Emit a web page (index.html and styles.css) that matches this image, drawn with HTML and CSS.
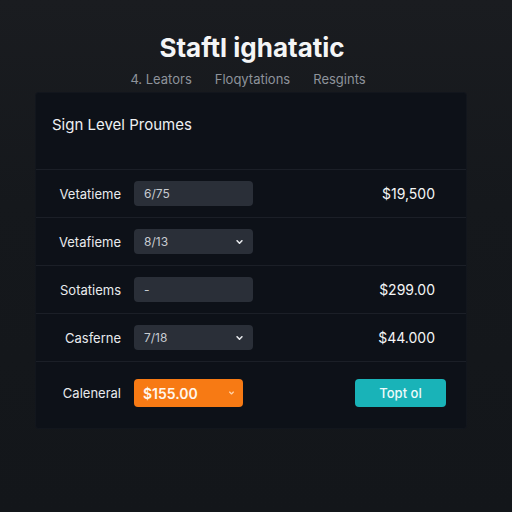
FILE: index.html
```html
<!DOCTYPE html>
<html>
<head>
<meta charset="utf-8">
<link rel="stylesheet" href="styles.css">
</head>
<body>
<header class="top">
  <h1 class="title">Staftl ighatatic</h1>
  <nav class="nav">
    <span>4. Leators</span>
    <span>Floqytations</span>
    <span>Resgints</span>
  </nav>
</header>
<main class="card">
  <div class="card-head">Sign Level Proumes</div>
  <div class="row">
    <span class="label">Vetatieme</span>
    <div class="field">6/75</div>
    <span class="amount">$19,500</span>
  </div>
  <div class="row">
    <span class="label">Vetafieme</span>
    <div class="field">8/13<svg class="chev" viewBox="0 0 8 5"><polyline points="1,1 4,4 7,1"/></svg></div>
    <span class="amount"></span>
  </div>
  <div class="row">
    <span class="label">Sotatiems</span>
    <div class="field">-</div>
    <span class="amount">$299.00</span>
  </div>
  <div class="row">
    <span class="label">Casferne</span>
    <div class="field">7/18<svg class="chev" viewBox="0 0 8 5"><polyline points="1,1 4,4 7,1"/></svg></div>
    <span class="amount">$44.000</span>
  </div>
  <div class="row last">
    <span class="label">Caleneral</span>
    <div class="field orange">$155.00<svg class="chev dim" viewBox="0 0 8 5"><polyline points="1,1 4,4 7,1"/></svg></div>
    <button class="btn">Topt ol</button>
  </div>
</main>
</body>
</html>
```
FILE: styles.css
```css
* { box-sizing: border-box; }
html, body {
  margin: 0;
  padding: 0;
}
body {
  width: 512px;
  height: 512px;
  background: linear-gradient(#1a1c20, #15181c 40%, #13161a);
  font-family: Inter, "Noto Sans", sans-serif;
  color: #f1f3f5;
  overflow: hidden;
}
.top {
  padding-top: 32px;
  display: flex;
  flex-direction: column;
  align-items: center;
}
.title {
  margin: 0;
  font-size: 26px;
  line-height: 32px;
  font-weight: 700;
  color: #f4f5f6;
  letter-spacing: 0;
  margin-left: -8px;
}
.nav {
  margin-top: 6px;
  display: flex;
  gap: 23px;
  font-size: 13px;
  line-height: 18px;
  color: #8e939b;
  margin-right: 16px;
}
.card {
  margin: 5px 0 0 36px;
  width: 430px;
  height: 335px;
  background: #0d1118;
  border-radius: 3px;
  box-shadow: 0 0 0 1px #12161d;
}
.card-head {
  height: 77px;
  padding: 22px 0 0 16px;
  font-size: 15px;
  line-height: 20px;
  color: #eef0f3;
  border-bottom: 1px solid #1b1f27;
}
.row {
  display: grid;
  grid-template-columns: 65px 119px 1fr;
  column-gap: 13px;
  align-items: center;
  height: 48px;
  padding: 0 20px 0 20px;
  border-bottom: 1px solid #1b1f27;
}
.row.last {
  height: 62px;
  border-bottom: none;
  grid-template-columns: 65px 109px 1fr;
}
.label {
  justify-self: end;
  font-size: 13px;
  color: #e8eaed;
  white-space: nowrap;
}
.field {
  height: 25px;
  border-radius: 4px;
  background: #2a2f38;
  display: flex;
  align-items: center;
  justify-content: space-between;
  padding: 0 10px 0 10px;
  font-size: 12px;
  color: #c7cbd1;
}
.chev {
  width: 7px;
  height: 4px;
  fill: none;
  stroke: #e6e8eb;
  stroke-width: 2;
  stroke-linecap: round;
  stroke-linejoin: round;
}
.chev.dim { stroke: #ffd2a8; width: 5px; }
.field.orange {
  height: 28px;
  background: #f77a14;
  color: #fff6ec;
  font-size: 14px;
  font-weight: 600;
  padding: 0 9px 0 9px;
}
.amount {
  justify-self: end;
  padding-right: 11px;
  font-size: 14px;
  color: #f4f5f6;
}
.btn {
  justify-self: end;
  width: 91px;
  height: 28px;
  border: none;
  border-radius: 4px;
  background: #19b3b8;
  color: #eefafa;
  font-family: Inter, "Noto Sans", sans-serif;
  font-size: 13px;
  font-weight: 500;
}
```
